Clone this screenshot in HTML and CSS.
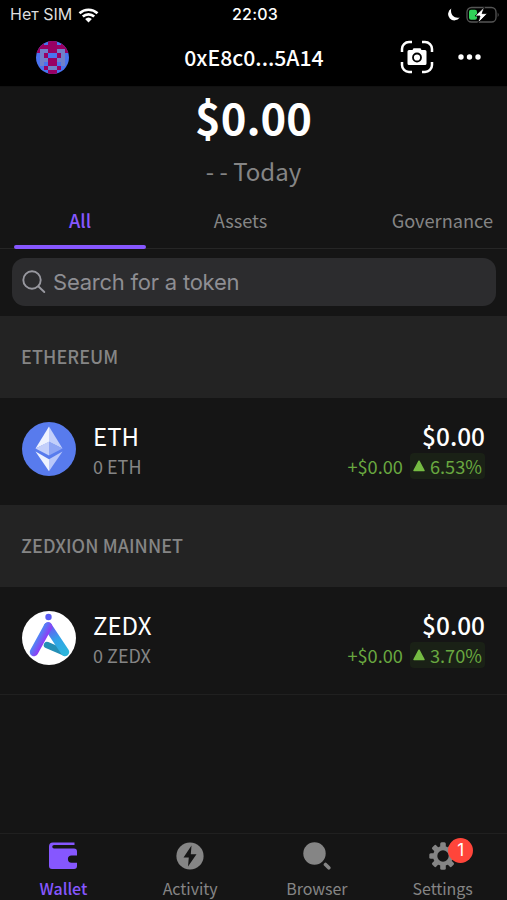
FILE: index.html
```html
<!DOCTYPE html>
<html lang="en">
<head>
<meta charset="utf-8">
<title>Wallet</title>
<link rel="stylesheet" href="styles.css">
</head>
<body>
<div class="app">
  <div class="status">
    <div class="carrier"><span>Нет SIM</span>
      <svg width="22" height="16" viewBox="0 0 22 16" fill="none" stroke="#fff" stroke-width="2.7"><path d="M1.5 6.2a13.5 13.5 0 0 1 18 0M4.8 9.6a8.5 8.5 0 0 1 11.4 0"/><path d="M7.1 12a5 5 0 0 1 6.800 0L10.500 15.400z" fill="#fff" stroke="none"/></svg>
    </div>
    <div class="clock">22:03</div>
    <div class="power">
      <svg width="13" height="14" viewBox="0 0 13 14"><path d="M4.300.6A6.300 6.300 0 1 0 12.700 9.500C7 11 2.800 6 4.300.6z" fill="#fff"/></svg>
      <svg width="34" height="18" viewBox="0 0 34 18"><rect x="1" y="1.500" width="29" height="14.500" rx="4.500" fill="none" stroke="#555" stroke-width="1.300"/><path d="M31.700 6.500q2 2.300 0 4.600z" fill="#555"/><rect x="3" y="3.800" width="8" height="10" rx="2" fill="#30d158"/><path d="M18.500 1 9 10h5l-2 7L21.300 7.600h-5.200z" fill="#fff" stroke="#000" stroke-width=".8"/></svg>
    </div>
  </div>
  <header class="header">
    <svg class="avatar" width="33" height="33" viewBox="0 0 8 8" shape-rendering="crispEdges"><rect width="8" height="8" fill="#4a73f0"/><path fill="#980064" d="M1 0h1v1H1zM3 0h2v2H3zM6 0h1v1H6zM0 1h3v1H0zM5 1h3v1H5zM0 2h1v1H0zM7 2h1v1H7zM3 2h2v1H3zM2 3h1v1H2zM5 3h1v1H5zM3 4h2v2H3zM2 6h1v1H2zM5 6h1v1H5zM3 7h2v1H3z"/><path fill="#7180cb" d="M1 2h2v1H1zM5 2h2v1H5zM1 3h1v3H1zM6 3h1v3H6zM2 4h1v1H2zM5 4h1v1H5zM3 6h2v1H3z"/></svg>
    <h1 class="address">0xE8c0...5A14</h1>
    <div class="actions">
      <svg width="34" height="34" viewBox="0 0 34 34" fill="none" stroke="#fff" stroke-width="2.500"><path d="M2 12V9a7 7 0 0 1 7-7h3M22 2h3a7 7 0 0 1 7 7v3M32 22v3a7 7 0 0 1-7 7h-3M12 32H9a7 7 0 0 1-7-7v-3"/><path fill="#fff" stroke="none" d="M9 10h3.500l1-1.800h7l1 1.800H25a1.500 1.500 0 0 1 1.500 1.500v12A1.500 1.500 0 0 1 25 25H9a1.500 1.500 0 0 1-1.500-1.500v-12A1.500 1.500 0 0 1 9 10z"/><circle cx="17" cy="17.500" r="4" stroke="#000" stroke-width="1.800"/></svg>
      <svg width="23" height="6" viewBox="0 0 23 6" fill="#fff"><circle cx="3" cy="3" r="2.700"/><circle cx="11.500" cy="3" r="2.700"/><circle cx="20" cy="3" r="2.700"/></svg>
    </div>
  </header>
  <section class="summary">
    <div class="total">$0.00</div>
    <div class="today">- - Today</div>
  </section>
  <nav class="tabs">
    <a class="tab tab-active">All</a><a class="tab">Assets</a><a class="tab tab-last">Governance</a>
  </nav>
  <div class="search">
    <svg width="24" height="24" viewBox="0 0 24 24" fill="none" stroke="#98989f" stroke-width="1.900" stroke-linecap="round"><circle cx="10" cy="10" r="8.700"/><path d="m16.500 16.500 5.800 5.500"/></svg>
    <span>Search for a token</span>
  </div>
  <main class="tokens">
    <h2 class="network">ETHEREUM</h2>
    <article class="token">
      <svg class="logo" width="54" height="54" viewBox="0 0 54 54"><circle cx="27" cy="27" r="27" fill="#587bed"/><path d="M27 4.500 13.500 26.500 27 20z" fill="#eef2fe"/><path d="M27 4.500 40.500 26.500 27 20z" fill="#c3cffa"/><path d="M13.500 26.500 27 19.500v14z" fill="#c3cffa"/><path d="M40.500 26.500 27 19.500v14z" fill="#8ea5f4"/><path d="M13.500 29.500 27 37.300v11.900z" fill="#eef2fe"/><path d="M40.500 29.500 27 37.300v11.900z" fill="#b9c7fa"/></svg>
      <div class="info"><div class="name">ETH</div><div class="amount">0 ETH</div></div>
      <div class="value"><div class="price">$0.00</div><div class="change"><span>+$0.00</span><span class="percent"><svg width="12" height="12" viewBox="0 0 12 12"><path d="M6 1.200 11 10.500H1z" fill="#76bd43" stroke="#76bd43" stroke-width="1.500" stroke-linejoin="round"/></svg>6.53%</span></div></div>
    </article>
    <h2 class="network">ZEDXION MAINNET</h2>
    <article class="token">
      <svg class="logo" width="54" height="54" viewBox="0 0 54 54" fill="none" stroke-linecap="round"><defs><linearGradient id="left" x1="14" y1="24" x2="23" y2="29" gradientUnits="userSpaceOnUse"><stop offset="0" stop-color="#3d9cf5"/><stop offset="1" stop-color="#8f3cf5"/></linearGradient><linearGradient id="right" x1="26" y1="14" x2="42" y2="44" gradientUnits="userSpaceOnUse"><stop offset="0" stop-color="#7549f5"/><stop offset=".5" stop-color="#31a3e8"/><stop offset="1" stop-color="#2db6db"/></linearGradient></defs><circle cx="27" cy="27" r="27" fill="#fff"/><circle cx="26.500" cy="6" r="3.200" fill="#5b5cf3"/><path d="M25 34 42.500 41.500" stroke="#258fb6" stroke-width="6.500"/><path d="M26 15.500 43 41" stroke="url(#right)" stroke-width="8.500"/><path d="M26 15.500 12 41" stroke="url(#left)" stroke-width="8.500"/></svg>
      <div class="info"><div class="name">ZEDX</div><div class="amount">0 ZEDX</div></div>
      <div class="value"><div class="price">$0.00</div><div class="change"><span>+$0.00</span><span class="percent"><svg width="12" height="12" viewBox="0 0 12 12"><path d="M6 1.200 11 10.500H1z" fill="#76bd43" stroke="#76bd43" stroke-width="1.500" stroke-linejoin="round"/></svg>3.70%</span></div></div>
    </article>
  </main>
  <nav class="bottom">
    <a class="item item-active"><svg width="28" height="28" viewBox="0 0 28 28"><path fill="#8657ff" d="M4 .5h21.500V3H5a1.500 1.500 0 0 0 0 3.500h20a3 3 0 0 1 3 3v4h-5.500a3.600 3.600 0 0 0 0 7.200H28V24a3 3 0 0 1-3 3H3a3 3 0 0 1-3-3V4.500a4 4 0 0 1 4-4z"/></svg><span>Wallet</span></a>
    <a class="item"><svg width="28" height="28" viewBox="0 0 28 28"><circle cx="14" cy="14" r="13.600" fill="#858585"/><path d="M15.500 3.500 7.500 15.500h5.300L12 24.500l8.500-12.300h-5.700z" fill="#151515"/></svg><span>Activity</span></a>
    <a class="item"><svg width="28" height="28" viewBox="0 0 28 28"><circle cx="11.500" cy="11.500" r="11.200" fill="#858585"/><path d="m22.500 22.500 3.300 3.300" stroke="#858585" stroke-width="3.600" stroke-linecap="round"/></svg><span>Browser</span></a>
    <a class="item"><svg width="28" height="28" viewBox="-14 -14 28 28"><g fill="#858585"><circle r="10"/><g id="teeth"><rect x="-2.800" y="-13.700" width="5.600" height="27.400" rx="1.500"/><rect x="-13.700" y="-2.800" width="27.400" height="5.600" rx="1.500"/></g><use href="#teeth" transform="rotate(45)"/></g><circle r="5.700" fill="#151515"/></svg><span>Settings</span><b class="badge">1</b></a>
  </nav>
</div>
</body>
</html>
```

FILE: styles.css
```css
* { box-sizing: border-box; }
body { margin: 0; background: #151515; color: #fff; font-family: "Noto Sans CJK SC", sans-serif; }
.app { width: 507px; height: 900px; display: flex; flex-direction: column; overflow: hidden; }
.status { height: 29px; background: #000; display: grid; grid-template-columns: 1fr auto 1fr; align-items: center; padding: 0 7px 0 10px; font: 16px/29px Inter, sans-serif; }
.carrier { display: flex; align-items: center; gap: 6px; color: #ddd; }
.clock { font-weight: 500; letter-spacing: .2px; }
.power { display: flex; align-items: center; justify-content: flex-end; gap: 6px; }
.header { height: 58px; background: #000; display: grid; grid-template-columns: 1fr auto 1fr; align-items: center; padding: 0 26px 1px 27px; border-bottom: 1px solid #111; }
.avatar { border-radius: 50%; margin-left: 9px; }
.address { margin: 0; font-size: 21.2px; line-height: 30px; font-weight: 500; }
.actions { display: flex; justify-content: flex-end; align-items: center; gap: 24px; }
.summary { height: 107px; text-align: center; padding-top: 3px; }
.total { font-size: 43.5px; line-height: 54px; font-weight: 700; }
.today { font-size: 24px; line-height: 34px; margin-top: 10px; color: #858585; }
.tabs { height: 55px; display: grid; grid-template-columns: 132px 189px 1fr; padding: 0 14px; border-bottom: 1px solid #262626; }
.tab { text-align: center; font-size: 18.2px; line-height: 52px; color: #858585; height: 55px; }
.tab-active { position: relative; color: #8657ff; font-weight: 500; }
.tab-active::after { content: ""; position: absolute; inset: auto 0 0; height: 4px; border-radius: 2px; background: #8657ff; }
.tab-last { text-align: right; }
.search { height: 48px; margin: 9px 11px 10px 12px; border-radius: 13px; background: #2c2c2e; display: flex; align-items: center; gap: 7px; padding: 0 10px; color: #8e8e93; font: 22px/48px Inter, sans-serif; letter-spacing: -.23px; flex-shrink: 0; }
.network { margin: 0; height: 82px; padding-left: 21px; background: #232323; color: #858585; font-size: 18px; line-height: 81px; font-weight: 500; letter-spacing: .08px; }
.token { height: 107px; display: flex; align-items: center; padding: 0 22px 5px; }
.tokens .token:last-child { height: 108px; border-bottom: 1px solid #202020; }
.info { margin-left: 17px; }
.name { font-size: 24px; line-height: 34px; }
.amount { font-size: 18px; line-height: 27px; color: #858585; }
.value { margin-left: auto; text-align: right; }
.price { font-size: 24.4px; line-height: 34px; font-weight: 500; }
.change { display: flex; gap: 7px; color: #69a840; font-size: 18.2px; line-height: 26px; }
.percent { display: flex; align-items: center; gap: 5px; padding: 0 3px; background: #1a2116; border-radius: 4px; }
.bottom { height: 67px; margin-top: auto; border-top: 1px solid #202020; display: grid; grid-template-columns: repeat(4, 1fr); flex-shrink: 0; }
.item { position: relative; display: flex; flex-direction: column; align-items: center; padding-top: 8px; font-size: 16px; line-height: 24px; letter-spacing: -.05px; color: #858585; gap: 6px; }
.item:last-child { padding-right: 2px; }
.item-active { color: #8657ff; font-weight: 500; }
.badge { position: absolute; left: 68px; top: 4px; width: 25px; height: 25px; border-radius: 50%; background: #ff453a; color: #fff; font: 17px/25px Inter, sans-serif; text-align: center; }
```
